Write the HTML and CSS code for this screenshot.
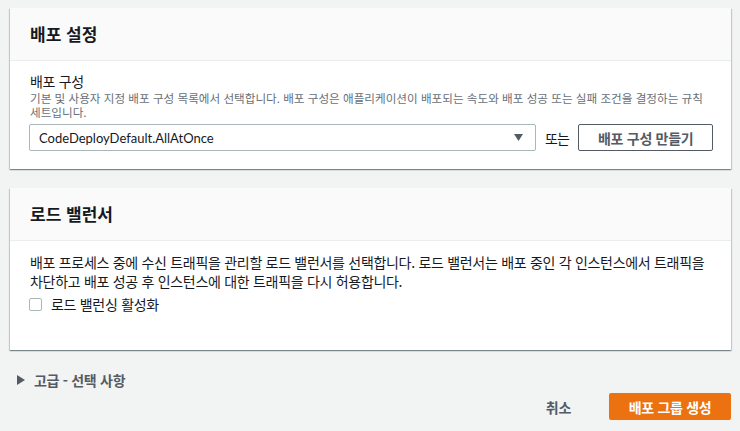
FILE: index.html
```html
<!DOCTYPE html>
<html lang="ko">
<head>
<meta charset="utf-8">
<title>배포 그룹 생성</title>
<link rel="stylesheet" href="styles.css">
</head>
<body>
<div class="page">
  <section class="card">
    <header class="card-header"><h2 class="card-title">배포 설정</h2></header>
    <div class="card-body card-body-first">
      <div class="field-label">배포 구성</div>
      <div class="field-desc">기본 및 사용자 지정 배포 구성 목록에서 선택합니다. 배포 구성은 애플리케이션이 배포되는 속도와 배포 성공 또는 실패 조건을 결정하는 규칙 세트입니다.</div>
      <div class="select-row">
        <div class="select">
          <span class="select-value">CodeDeployDefault.AllAtOnce</span>
          <svg class="caret" width="9" height="7" viewBox="0 0 9 7"><polygon points="0,0 9,0 4.5,7" fill="#545b64"/></svg>
        </div>
        <span class="or">또는</span>
        <button class="btn-normal">배포 구성 만들기</button>
      </div>
    </div>
  </section>

  <section class="card card-second">
    <header class="card-header card-header-second"><h2 class="card-title">로드 밸런서</h2></header>
    <div class="card-body card-body-second">
      <p class="para">배포 프로세스 중에 수신 트래픽을 관리할 로드 밸런서를 선택합니다. 로드 밸런서는 배포 중인 각 인스턴스에서 트래픽을 차단하고 배포 성공 후 인스턴스에 대한 트래픽을 다시 허용합니다.</p>
      <label class="check-row"><span class="checkbox"></span><span class="check-label">로드 밸런싱 활성화</span></label>
    </div>
  </section>

  <div class="advanced">
    <svg class="adv-caret" width="8" height="10" viewBox="0 0 8 10"><polygon points="0,0 8,5 0,10" fill="#545b64"/></svg>
    <span>고급 - 선택 사항</span>
  </div>

  <div class="actions">
    <button class="btn-link">취소</button>
    <button class="btn-primary">배포 그룹 생성</button>
  </div>
</div>
</body>
</html>
```

FILE: styles.css
```css
html, body {
  margin: 0;
  padding: 0;
  background: #f2f3f3;
}
body {
  font-family: "Noto Sans CJK KR", "Noto Sans", sans-serif;
  color: #16191f;
  font-size: 14px;
  letter-spacing: -0.3px;
}
.page {
  padding: 8px 9px 0 10px;
}
.card {
  background: #ffffff;
  box-shadow: 0 1px 1px 0 rgba(0, 28, 36, 0.3), 1px 1px 1px 0 rgba(0, 28, 36, 0.15), -1px 1px 1px 0 rgba(0, 28, 36, 0.15);
}
.card-second {
  margin-top: 19px;
}
.card-header {
  background: #fafafa;
  border-bottom: 1px solid #eaeded;
  padding: 0 20px 1px 20px;
  display: flex;
  align-items: center;
  box-sizing: border-box;
  height: 53px;
}
.card-title {
  margin: 0;
  font-size: 17px;
  font-weight: 700;
  letter-spacing: 0;
  line-height: 20px;
  color: #16191f;
}
.card-body {
  padding: 10px 20px 18px 20px;
}
.card-body-second {
  padding-top: 12px;
  padding-bottom: 36px;
}
.field-label {
  line-height: 20px;
}
.field-desc {
  font-size: 11.6px;
  line-height: 14px;
  color: #687078;
  letter-spacing: 0;
}
.select-row {
  margin-top: 5px;
  display: flex;
  align-items: center;
  white-space: nowrap;
}
.select {
  flex: none;
  width: 507px;
  height: 27px;
  box-sizing: border-box;
  border: 1px solid #aab7b8;
  border-radius: 2px;
  margin-left: -1px;
  padding: 0 12px 0 9px;
  display: flex;
  align-items: center;
  justify-content: space-between;
}
.select-value {
  font-family: Lato, "Noto Sans CJK KR", sans-serif;
  font-size: 13px;
  letter-spacing: 0;
  color: #16191f;
}
.caret {
  display: block;
}
.or {
  flex: none;
  margin-left: 9px;
  line-height: 20px;
  letter-spacing: -0.8px;
}
.btn-normal {
  flex: none;
  margin-left: 9px;
  width: 135px;
  height: 27px;
  box-sizing: border-box;
  border: 1px solid #545b64;
  border-radius: 2px;
  background: #ffffff;
  color: #545b64;
  font-family: inherit;
  font-size: 14px;
  font-weight: 700;
  letter-spacing: -0.3px;
  padding: 0;
  cursor: pointer;
}
.para {
  margin: 0;
  line-height: 19px;
}
.check-row {
  margin-top: 3px;
  display: flex;
  align-items: center;
  height: 20px;
}
.checkbox {
  width: 13px;
  height: 13px;
  box-sizing: border-box;
  border: 1px solid #aab7b8;
  border-radius: 2px;
  margin-left: -1px;
  background: #fff;
}
.check-label {
  margin-left: 9px;
}
.advanced {
  margin-top: 20px;
  margin-left: 7px;
  display: flex;
  align-items: center;
  height: 20px;
  font-weight: 700;
  color: #545b64;
}
.adv-caret {
  display: block;
  margin-right: 9px;
}
.actions {
  margin-top: 3px;
  display: flex;
  justify-content: flex-end;
  align-items: center;
}
.btn-link {
  background: none;
  border: none;
  font-family: inherit;
  font-size: 14px;
  font-weight: 700;
  letter-spacing: -0.3px;
  color: #545b64;
  padding: 0;
  margin-right: 38px;
}
.btn-primary {
  width: 122px;
  height: 27px;
  border: none;
  border-radius: 2px;
  background: #ec7211;
  color: #ffffff;
  font-family: inherit;
  font-size: 14px;
  font-weight: 700;
  letter-spacing: -0.3px;
  padding: 0;
}
```
